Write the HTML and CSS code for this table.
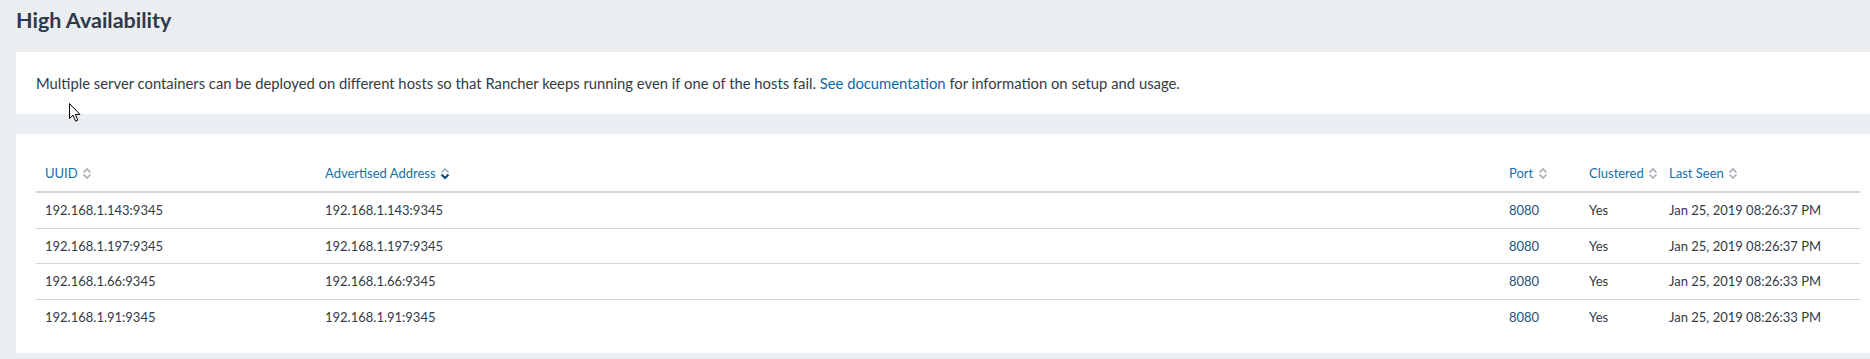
FILE: index.html
```html
<!DOCTYPE html>
<html>
<head>
<meta charset="utf-8">
<link rel="stylesheet" href="styles.css">
</head>
<body>
<div class="page">
  <h1 class="title">High Availability</h1>
  <section class="panel intro">
    <p>Multiple server containers can be deployed on different hosts so that Rancher keeps running even if one of the hosts fail. <a href="#">See documentation</a> for information on setup and usage.</p>
  </section>
  <section class="panel list">
    <table class="grid">
      <colgroup>
        <col class="c-uuid"><col class="c-addr"><col class="c-port"><col class="c-clu"><col class="c-seen">
      </colgroup>
      <thead>
        <tr>
          <th>UUID <span class="sort"><svg viewBox="0 0 10 13" width="10" height="13"><path d="M1.5 5.5 L5 2 L8.5 5.5" /><path d="M1.5 7.5 L5 11 L8.5 7.5" /></svg></span></th>
          <th>Advertised Address <span class="sort active"><svg viewBox="0 0 10 13" width="10" height="13"><path class="up" d="M1.5 5.5 L5 2 L8.5 5.5" /><path class="down" d="M1.5 7.5 L5 11 L8.5 7.5" /></svg></span></th>
          <th>Port <span class="sort"><svg viewBox="0 0 10 13" width="10" height="13"><path d="M1.5 5.5 L5 2 L8.5 5.5" /><path d="M1.5 7.5 L5 11 L8.5 7.5" /></svg></span></th>
          <th>Clustered <span class="sort"><svg viewBox="0 0 10 13" width="10" height="13"><path d="M1.5 5.5 L5 2 L8.5 5.5" /><path d="M1.5 7.5 L5 11 L8.5 7.5" /></svg></span></th>
          <th>Last Seen <span class="sort"><svg viewBox="0 0 10 13" width="10" height="13"><path d="M1.5 5.5 L5 2 L8.5 5.5" /><path d="M1.5 7.5 L5 11 L8.5 7.5" /></svg></span></th>
        </tr>
      </thead>
      <tbody>
        <tr><td>192.168.1.143:9345</td><td>192.168.1.143:9345</td><td class="port">8080</td><td>Yes</td><td>Jan 25, 2019 08:26:37 PM</td></tr>
        <tr><td>192.168.1.197:9345</td><td>192.168.1.197:9345</td><td class="port">8080</td><td>Yes</td><td>Jan 25, 2019 08:26:37 PM</td></tr>
        <tr><td>192.168.1.66:9345</td><td>192.168.1.66:9345</td><td class="port">8080</td><td>Yes</td><td>Jan 25, 2019 08:26:33 PM</td></tr>
        <tr><td>192.168.1.91:9345</td><td>192.168.1.91:9345</td><td class="port">8080</td><td>Yes</td><td>Jan 25, 2019 08:26:33 PM</td></tr>
      </tbody>
    </table>
  </section>
  <svg class="cursor" viewBox="0 0 12 19" width="12" height="19"><path d="M0.5 0.5 L0.5 15.5 L4 12.2 L6.6 18.2 L8.8 17.2 L6.3 11.4 L11 11.4 Z" fill="#fff" stroke="#000" stroke-width="1"/></svg>
</div>
</body>
</html>
```

FILE: styles.css
```css
html, body {
  margin: 0;
  padding: 0;
  background: #ebeef0;
  overflow: hidden;
}
body {
  font-family: Lato, "Open Sans", sans-serif;
  color: #333a45;
  font-size: 14px;
}
.page {
  position: relative;
  padding: 0 0 0 16px;
}
.title {
  margin: 0;
  padding: 6px 0 0 0;
  height: 46px;
  font-size: 21.5px;
  font-weight: 700;
  line-height: 28px;
  color: #2c3a4a;
}
.panel {
  background: #fff;
  margin-right: -10px;
}
.intro {
  height: 62px;
  margin-bottom: 20px;
  padding: 0 20px;
  box-sizing: border-box;
  display: flex;
  align-items: center;
}
.intro p {
  margin: 0;
  font-size: 14.8px;
  line-height: 20px;
}
.intro a {
  color: #0d6aa8;
  text-decoration: none;
}
.list {
  padding: 20px 20px 20px 20px;
  height: 219px;
  box-sizing: border-box;
}
.grid {
  width: 1824px;
  border-collapse: collapse;
  table-layout: fixed;
}
.c-uuid { width: 280px; }
.c-addr { width: 1184px; }
.c-port { width: 80px; }
.c-clu { width: 80px; }
.c-seen { width: 200px; }
.grid th {
  text-align: left;
  font-weight: 400;
  color: #1470ad;
  font-size: 13px;
  padding: 0 9px;
  height: 37px;
  border-bottom: 2px solid #d3d6d9;
  white-space: nowrap;
}
.grid td {
  padding: 0 9px;
  height: 34.5px;
  font-size: 13px;
  border-bottom: 1px solid #d3d6d9;
  white-space: nowrap;
}
.grid tbody tr:last-child td {
  border-bottom: none;
}
.grid td.port {
  color: #24527a;
}
.sort {
  display: inline-block;
  vertical-align: -2px;
  margin-left: 1px;
}
.sort svg {
  display: block;
  fill: none;
  stroke: #a9aeb4;
  stroke-width: 1.7;
}
.sort.active .up { stroke: #9fb7cc; }
.sort.active .down { stroke: #0b4f80; stroke-width: 2.2; }
.cursor {
  position: absolute;
  left: 69px;
  top: 103px;
}
```
